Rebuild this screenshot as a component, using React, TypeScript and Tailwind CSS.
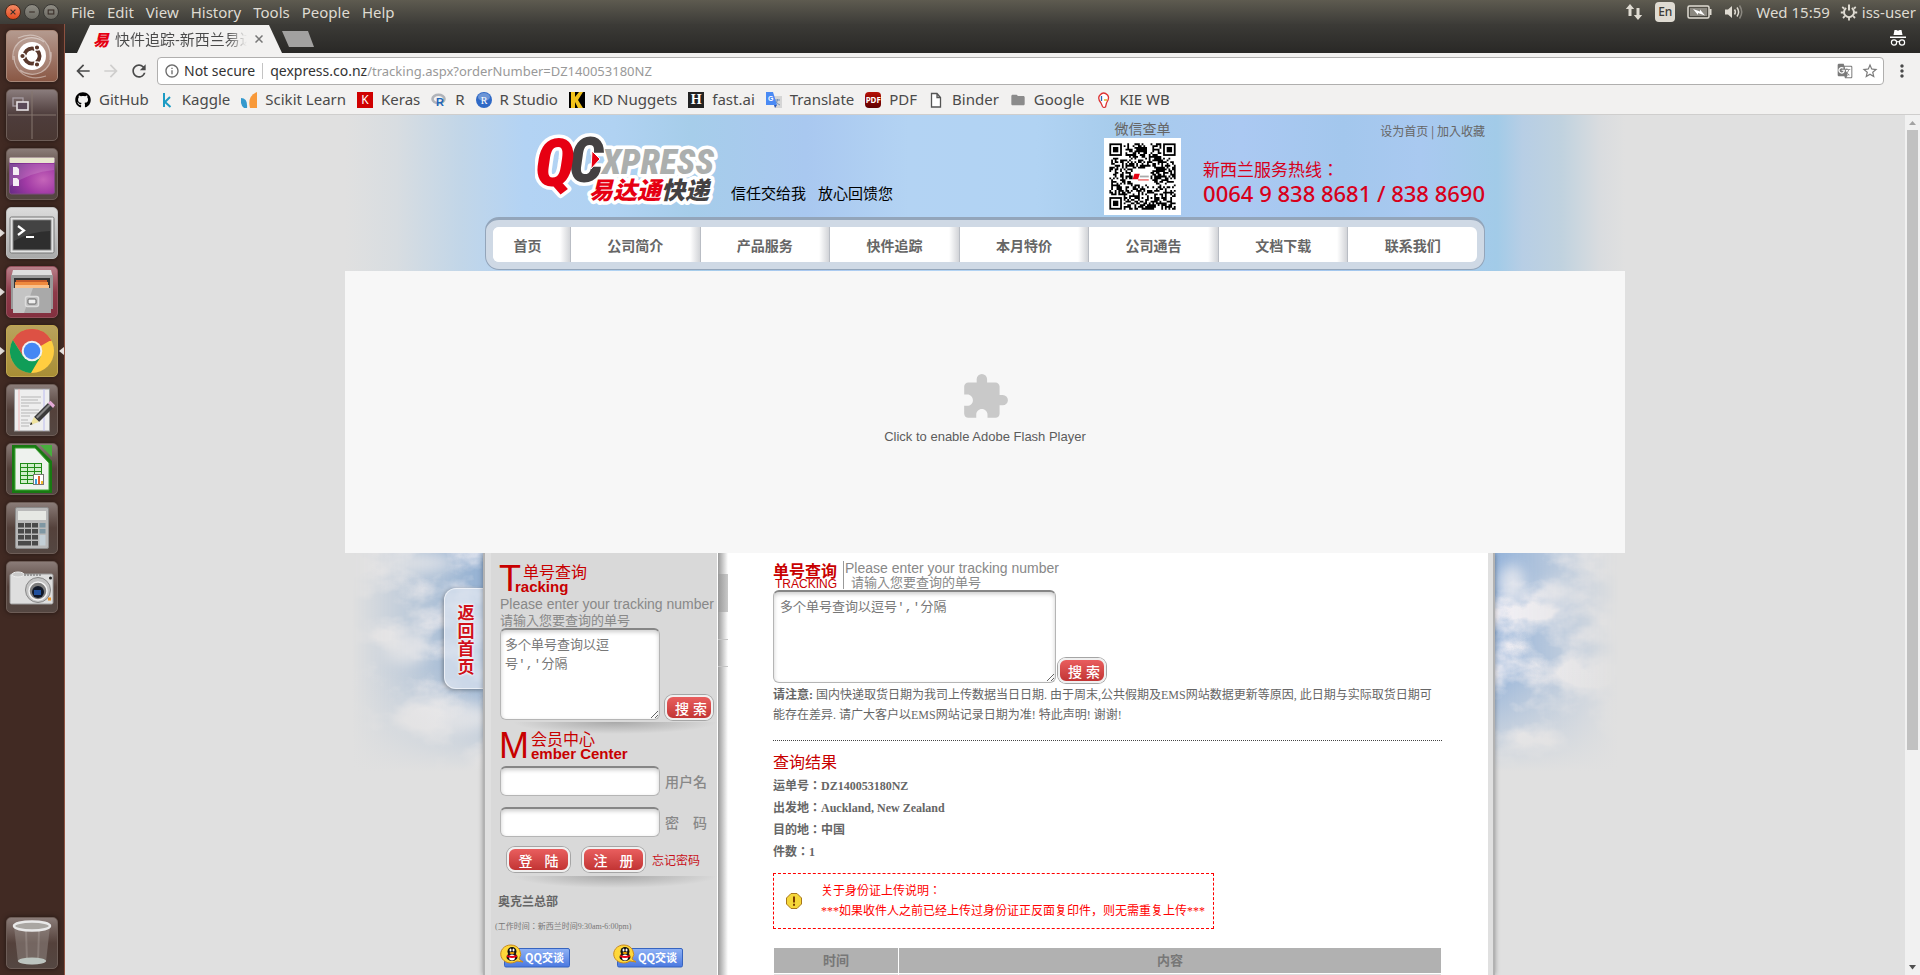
import React from "react";
import {
  MdArrowBack,
  MdArrowForward,
  MdExtension,
  MdFolder,
  MdGTranslate,
  MdInfoOutline,
  MdMoreVert,
  MdRefresh,
  MdStarBorder,
} from "react-icons/md";
import { FaGithub } from "react-icons/fa";

/* ---------- Desktop panel ---------- */

const MENUS = ["File", "Edit", "View", "History", "Tools", "People", "Help"];

function WindowButton({ label, close, children }: { label: string; close?: boolean; children: React.ReactNode }) {
  return (
    <button
      aria-label={label}
      className={
        close
          ? "flex size-4 items-center justify-center rounded-full border border-[#4a2a1c] bg-linear-to-b from-[#f58a63] to-[#e2491c]"
          : "flex size-4 items-center justify-center rounded-full border border-[#3a3935] bg-linear-to-b from-[#8f8d84] to-[#6b6962]"
      }
    >
      <svg viewBox="0 0 10 10" className="size-2" fill="none" stroke="#3a2f2a" strokeWidth="1.4">
        {children}
      </svg>
    </button>
  );
}

function TopPanel() {
  return (
    <header className="flex h-6 shrink-0 items-center justify-between bg-linear-to-b from-[#5e5b50] to-[#3d3c38] pl-[5px] pr-1 text-[15px] text-[#dfdbd2]">
      <div className="flex items-center">
        <div className="flex gap-[3px]">
          <WindowButton label="Close" close>
            <path d="M2 2l6 6M8 2l-6 6" />
          </WindowButton>
          <WindowButton label="Minimize">
            <path d="M1.500 5h7" />
          </WindowButton>
          <WindowButton label="Maximize">
            <rect x="1.500" y="2.500" width="7" height="5" />
          </WindowButton>
        </div>
        <nav className="ml-3 flex gap-3">
          {MENUS.map((m) => (
            <button key={m} className="leading-6">
              {m}
            </button>
          ))}
        </nav>
      </div>
      <div className="flex items-center">
        <svg viewBox="0 0 18 18" className="mr-3 h-[18px] w-[18px]" fill="#dfdbd2">
          <path d="M5 1l4.200 5H6.500v7h-3V6H.800zM13 17l-4.200-5h2.700V5h3v7h2.700z" />
        </svg>
        <span className="mr-3 flex h-5 w-5 items-center justify-center rounded-sm bg-[#dfdbd2] text-xs font-medium text-[#3d3c38]">En</span>
        <svg viewBox="0 0 25 14" className="mr-3 h-3.5 w-[25px]">
          <rect x="1" y="1" width="21" height="12" rx="1.500" fill="none" stroke="#dfdbd2" strokeWidth="1.500" />
          <rect x="3" y="3" width="17" height="8" fill="#8b8880" />
          <rect x="22.500" y="4" width="2" height="6" fill="#dfdbd2" />
          <path d="M6 4l7 2.500 0-2 5 6-7-2.500 0 2z" fill="#fff" />
        </svg>
        <svg viewBox="0 0 20 18" className="mr-3 h-[18px] w-5" fill="none" stroke="#dfdbd2" strokeWidth="1.500">
          <path d="M1 6.500h3l4-3.500v12l-4-3.500H1z" fill="#dfdbd2" stroke="none" />
          <path d="M10.500 6.500q1.800 2.500 0 5" />
          <path d="M13 4.500q3.200 4.500 0 9" />
          <path d="M15.500 2.500q4.500 6.500 0 13" stroke="#8b8880" />
        </svg>
        <span className="mr-2.5">Wed 15:59</span>
        <svg viewBox="0 0 18 18" className="mr-1 size-[18px]" fill="none" stroke="#dfdbd2" strokeWidth="2">
          <path d="M6.200 5a5 5 0 1 0 5.600 0M9 1.500v6" />
          <path d="M2.200 4l2 1.500M15.800 4l-2 1.500M.800 9.500h2.700M14.500 9.500h2.700M3 15l1.800-1.800M15 15l-1.800-1.800M9 15v2.500" strokeWidth="1.800" />
        </svg>
        <span>iss-user</span>
      </div>
    </header>
  );
}

/* ---------- Launcher ---------- */

const TILE_DARK = "bg-linear-to-b from-[#8a7c78] via-[#54413b] to-[#544742] border-[#6d5d57]";

function Tile({ tone, label, running, focused, children }: { tone: string; label: string; running?: boolean; focused?: boolean; children: React.ReactNode }) {
  return (
    <div className="flex items-center">
      <svg viewBox="0 0 6 8" className="h-2 w-1.5 shrink-0">
        {running && <path d="M0 0l5 4-5 4z" fill="#e4dedb" />}
      </svg>
      <button aria-label={label} className={`flex size-[52px] shrink-0 items-center justify-center overflow-hidden rounded-[5px] border shadow-[0_0_5px_rgba(0,0,0,0.5)] ${tone}`}>
        <svg viewBox="0 0 52 52" className="size-[52px] shrink-0">
          {children}
        </svg>
      </button>
      <svg viewBox="0 0 6 8" className="h-2 w-1.5 shrink-0">
        {focused && <path d="M6 0l-5 4 5 4z" fill="#e4dedb" />}
      </svg>
    </div>
  );
}

function Launcher() {
  return (
    <aside className="flex w-[65px] shrink-0 flex-col justify-between border-r border-[#8d5140] bg-[#412a23] pb-1.5 pt-1.5">
      <div className="flex flex-col gap-[7px]">
        <Tile tone="bg-linear-to-b from-[#b49a8f] to-[#8a5845] border-[#a98878]" label="Dash">
          <circle cx="26" cy="26" r="19" fill="#fff" opacity=".14" />
          <path d="M7 30C4 10 26 2 38 12M45 22c3 20-19 28-31 18M12 8c18-8 34 2 32 22M40 46C22 52 8 42 8 26" fill="none" stroke="#fff" strokeOpacity=".4" strokeWidth="1.200" />
          <circle cx="26" cy="26" r="14" fill="#fff" />
          <circle cx="26" cy="26" r="7.500" fill="none" stroke="#5a382c" strokeWidth="4" />
          <g stroke="#fff" strokeWidth="1.500">
            <path d="M26 26H14M26 26l6-11M26 26l6 11" />
          </g>
          <circle cx="26" cy="26" r="5.500" fill="#fff" />
          <g fill="#5a382c" stroke="#fff" strokeWidth="1.200">
            <circle cx="16.500" cy="26" r="2.700" />
            <circle cx="31" cy="17.500" r="2.700" />
            <circle cx="31" cy="34.500" r="2.700" />
          </g>
        </Tile>
        <Tile tone="bg-linear-to-b from-[#8a7c7c] via-[#4e3d3c] to-[#4a3833] border-[#6d5d57]" label="Workspaces">
          <path d="M26 2v48M2 26h48" stroke="#85776f" strokeWidth="1" />
          <rect x="7" y="9" width="10" height="8" fill="none" stroke="#a79da4" strokeWidth="1.300" />
          <rect x="11" y="13" width="11" height="8" fill="#5b4a58" stroke="#e6e2e4" strokeWidth="1.600" />
        </Tile>
        <Tile tone={TILE_DARK} label="Desktop">
          <defs>
            <radialGradient id="desk" cx=".75" cy=".6" r=".8">
              <stop offset="0" stopColor="#c565b9" />
              <stop offset=".5" stopColor="#a13aa5" />
              <stop offset="1" stopColor="#6b2c87" />
            </radialGradient>
          </defs>
          <rect x="3.500" y="10" width="45" height="36" rx="2" fill="url(#desk)" stroke="#7f4b83" />
          <rect x="3.500" y="9.500" width="45" height="5.500" rx="1" fill="#e8e6cf" />
          <path d="M4 16h44v6Q24 24 4 38z" fill="#fff" opacity=".15" />
          <path d="M7 19h4l2 2v6H7zM7 30h4l2 2v6H7z" fill="#f4eef4" />
        </Tile>
        <Tile tone="bg-linear-to-b from-[#dcdcdc] to-[#a9a9a9] border-[#bcbcbc]" label="Terminal" running>
          <rect x="4" y="10" width="44" height="36" rx="1.500" fill="#e4e4e4" stroke="#777" />
          <rect x="7" y="13" width="38" height="30" fill="#2e2e2e" stroke="#8a8a8a" />
          <path d="M8 14h36v10Q26 24 8 34z" fill="#fff" opacity=".1" />
          <path d="M12 19l6 4.500-6 4.500" fill="none" stroke="#fff" strokeWidth="2.200" />
          <path d="M20 30h8" stroke="#fff" strokeWidth="1.800" />
        </Tile>
        <Tile tone="bg-linear-to-b from-[#b8808a] via-[#8e3a49] to-[#83303f] border-[#95505c]" label="Files" running>
          <path d="M7 4h38l2 8H5z" fill="#dedede" />
          <rect x="5" y="9" width="42" height="34" fill="#999" />
          <rect x="8" y="12" width="36" height="11" fill="#333" />
          <path d="M10 14h31v8H10z" fill="#c55b2a" />
          <path d="M9 16h33v7H9z" fill="#ef8a3e" />
          <path d="M9 19h34v4H9z" fill="#f9c08a" />
          <path d="M7 22h38v25H7z" fill="#a9a9a9" />
          <path d="M7 22h20L18 47H7z" fill="#c4c4c4" />
          <rect x="19.500" y="30.500" width="13" height="10" rx="2" fill="#bdbdbd" stroke="#ddd" strokeWidth="1.500" />
          <rect x="22" y="33" width="8" height="5" rx="1" fill="#eee" stroke="#666" />
        </Tile>
        <Tile tone="bg-linear-to-b from-[#b9a25c] to-[#a88e35] border-[#c0a650]" label="Chrome" running focused>
          <circle cx="26" cy="26" r="22" fill="#ffcd40" />
          <path d="M26 26L6.900 15A22 22 0 0 1 45.100 15z" fill="#dd5144" />
          <path d="M26 16h19.500A22 22 0 0 0 6.900 15L17 31z" fill="#dd5144" />
          <path d="M6.900 15A22 22 0 0 0 25 48l10-17-9 4-9-4z" fill="#109d58" />
          <circle cx="26" cy="26" r="10.300" fill="#f1f1f1" />
          <circle cx="26" cy="26" r="8.300" fill="#4587f3" />
        </Tile>
        <Tile tone={TILE_DARK} label="Text editor">
          <rect x="8.500" y="5" width="35" height="42" fill="#eee" stroke="#999" />
          <path d="M13 5v42" stroke="#f0b6b6" />
          <path d="M38 5v42" stroke="#bcbcf0" />
          <path d="M15 13h20M15 16h17M15 19h20M15 22h8M15 26h18M15 29h17M15 32h9M15 36h7M15 39h9M15 42h8" stroke="#b5b5b5" />
          <path d="M28 33L42 19l5 5-14 14z" fill="#3a3a3a" />
          <path d="M30 33L43 20l1.500 1.500L31.500 34.500z" fill="#888" />
          <path d="M28 33l5 5-9 3z" fill="#efe3a0" />
          <path d="M25 38l1.500 2.200L24 41z" fill="#222" />
          <path d="M42 19l2.500-2.300 4.500 4.500L47 24z" fill="#e3a9d5" />
        </Tile>
        <Tile tone={TILE_DARK} label="Calc">
          <path d="M6 2h24l16 16v32H6z" fill="#187a12" />
          <path d="M34 2h12v12z" fill="#48ad3d" />
          <path d="M9 5h20l14 15v27H9z" fill="#eef2ee" stroke="#3fa634" strokeWidth="1" />
          <g fill="#cfeec9" stroke="#1f8a17" strokeWidth="1">
            <rect x="14.500" y="20.500" width="21" height="20" />
            <path d="M14.500 24.500h21M14.500 28.500h21M14.500 32.500h21M14.500 36.500h21M21.500 20.500v20M28.500 20.500v20" />
          </g>
          <rect x="27.500" y="31.500" width="10" height="10" fill="#fff" stroke="#777" />
          <path d="M29 36h2v5h-2z" fill="#3c9de0" />
          <path d="M32 33h2v8h-2z" fill="#e0602c" />
          <path d="M35 38h2v3h-2z" fill="#f2b92c" />
        </Tile>
        <Tile tone={TILE_DARK} label="Calculator">
          <rect x="9.500" y="5.500" width="33" height="41" rx="1.500" fill="#b9b9b9" stroke="#8b8b8b" />
          <rect x="12" y="9" width="28" height="9" fill="#e6e8e4" />
          <g fill="#4a4a4a">
            <path d="M12 21h6v4.500h-6zM19 21h6v4.500h-6zM26 21h6v4.500h-6zM12 27h6v4.500h-6zM19 27h6v4.500h-6zM26 27h6v4.500h-6zM12 33h6v4.500h-6zM19 33h6v4.500h-6zM26 33h6v4.500h-6zM12 39h13v4.500H12zM26 39h6v4.500h-6z" />
          </g>
          <path d="M33.500 21h6v4.500h-6zM33.500 27h6v4.500h-6z" fill="#7f97a3" />
          <path d="M33.500 33h6v10.500h-6z" fill="#c3cfd6" />
        </Tile>
        <Tile tone={TILE_DARK} label="Screenshot">
          <rect x="4" y="13" width="43" height="30" rx="1.500" fill="#dedede" stroke="#9c9c9c" />
          <ellipse cx="12" cy="13.500" rx="6" ry="2.500" fill="#c9c9c9" stroke="#eee" />
          <path d="M18 14h18" stroke="#888" strokeWidth="1.500" strokeDasharray="2 1" />
          <circle cx="32" cy="29" r="12.500" fill="#c4c4c4" stroke="#888" />
          <circle cx="32" cy="30" r="9" fill="#7c7c7c" stroke="#f2f2f2" strokeWidth="1.500" />
          <circle cx="32" cy="31" r="6" fill="#101828" />
          <rect x="28" y="29" width="7" height="5" fill="#1f4f9d" />
          <circle cx="44.500" cy="17" r="1.500" fill="#222" />
          <rect x="42" y="36.500" width="3" height="3" fill="#e8932a" />
        </Tile>
      </div>
      <Tile tone={TILE_DARK} label="Trash">
        <path d="M8 9l4 36q14 5 28 0l4-36z" fill="#9c928d" opacity=".45" />
        <path d="M20 13l1 31M33 13l-1 31" stroke="#c8c0bc" strokeOpacity=".25" strokeWidth="2" />
        <ellipse cx="26" cy="44" rx="14" ry="3.500" fill="#bcc4bf" />
        <ellipse cx="26" cy="9" rx="18" ry="4.500" fill="#a9a6a2" stroke="#e9e9e9" strokeWidth="2.500" />
      </Tile>
    </aside>
  );
}

/* ---------- Browser chrome ---------- */

function TabStrip() {
  return (
    <div className="flex h-[29px] shrink-0 items-end justify-between bg-linear-to-b from-[#3c3b37] to-[#292826]">
      <div className="flex h-7 items-center pl-3">
        <div className="flex h-7 w-[205px] items-center bg-[#f2f1f0] pl-3 pr-4 [clip-path:polygon(0_100%,13px_0,192px_0,100%_100%)]">
          <span className="w-[26px] pl-1 font-['Noto_Sans_CJK_JP',sans-serif] text-base leading-6 font-black text-[#e60012] italic">易</span>
          <span className="w-[132px] overflow-hidden bg-linear-to-r from-[#4a4a4a] from-85% to-transparent bg-clip-text text-[15px] leading-6 whitespace-nowrap text-transparent">
            快件追踪-新西兰易达
          </span>
          <button aria-label="Close tab" className="ml-2">
            <svg viewBox="0 0 8 8" className="size-2" stroke="#777" strokeWidth="1.500">
              <path d="M0.500 0.500l7 7M7.500 0.500l-7 7" />
            </svg>
          </button>
        </div>
        <button aria-label="New tab" className="h-4 w-8 bg-[#a2a1a0] [clip-path:polygon(0_0,26px_0,100%_100%,7px_100%)]" />
      </div>
      <svg viewBox="0 0 18 18" className="mr-[13px] mb-1.5 size-[18px]" fill="#fff">
        <path d="M5.500 1h1.800l1.700.7L10.700 1h1.800l1 5h-9zM1 7.500h16V9H1z" />
        <g fill="none" stroke="#fff" strokeWidth="1.200">
          <circle cx="5" cy="13.500" r="2.600" />
          <circle cx="13" cy="13.500" r="2.600" />
          <path d="M7.600 13q1.400-1 2.800 0" />
        </g>
      </svg>
    </div>
  );
}

function Toolbar() {
  return (
    <div className="flex h-9 shrink-0 items-center bg-[#f2f1f0] pl-2 pr-2 text-sm text-[#4a4a4a]">
      <button aria-label="Back" className="mr-2">
        <MdArrowBack className="size-5" />
      </button>
      <button aria-label="Forward" className="mr-2">
        <MdArrowForward className="size-5 text-[#cfcecd]" />
      </button>
      <button aria-label="Reload" className="mr-2">
        <MdRefresh className="size-5" />
      </button>
      <div className="flex h-7 flex-1 items-center rounded-sm border border-[#b0afae] bg-white pl-1.5 pr-1">
        <MdInfoOutline className="mr-1 size-4 text-[#6b6b6b]" />
        <span className="text-[#333]">Not secure</span>
        <span className="mx-[7px] h-4 w-px bg-[#c4c4c4]" />
        <label htmlFor="url" className="text-[#333]">
          qexpress.co.nz
        </label>
        <input id="url" className="min-w-0 flex-1 bg-transparent text-[13px] text-[#999] outline-none" defaultValue="/tracking.aspx?orderNumber=DZ140053180NZ" />
        <MdGTranslate className="mr-2 size-4 text-[#7a7a7a]" />
        <MdStarBorder className="size-[18px] text-[#7a7a7a]" />
      </div>
      <button aria-label="Menu" className="ml-2">
        <MdMoreVert className="size-5" />
      </button>
    </div>
  );
}

const BOOKMARKS: { name: string; icon: React.ReactNode }[] = [
  { name: "GitHub", icon: <FaGithub className="size-4 text-black" /> },
  {
    name: "Kaggle",
    icon: (
      <svg viewBox="-2 0 14 16" className="h-4 w-3.5" fill="none" stroke="#1c9bc4" strokeWidth="2">
        <path d="M2 1v14M8 5L3 10l5.500 5" />
      </svg>
    ),
  },
  {
    name: "Scikit Learn",
    icon: (
      <svg viewBox="0 0 16 16" className="size-4">
        <path d="M0 6q7 0 6 10H3Q-1 13 0 6z" fill="#3499cd" />
        <path d="M16 0v16H9Q6 4 16 0z" fill="#f89939" />
      </svg>
    ),
  },
  { name: "Keras", icon: <span className="flex size-4 items-center justify-center bg-[#d00000] text-xs text-white">K</span> },
  {
    name: "R",
    icon: (
      <svg viewBox="0 0 16 16" className="size-4">
        <ellipse cx="7.500" cy="7" rx="6" ry="4.200" fill="none" stroke="#b1b4ba" strokeWidth="2.600" />
        <text x="5" y="14" fontSize="11" fontWeight="700" fill="#2066b8" fontFamily="Liberation Sans, sans-serif">R</text>
      </svg>
    ),
  },
  {
    name: "R Studio",
    icon: (
      <svg viewBox="0 0 16 16" className="size-4">
        <circle cx="8" cy="8" r="8" fill="#2f69c6" />
        <ellipse cx="8" cy="5" rx="6" ry="4" fill="#fff" opacity=".3" />
        <text x="8" y="12" textAnchor="middle" fontSize="10" fill="#fff" fontFamily="Liberation Serif, serif">R</text>
      </svg>
    ),
  },
  {
    name: "KD Nuggets",
    icon: (
      <svg viewBox="0 0 16 16" className="size-4">
        <path d="M0 0h16v16H0z" />
        <path d="M2 0h4v5l4-5h4L9 8l5 8H9L6 10v6H2z" fill="#f2c21a" />
      </svg>
    ),
  },
  { name: "fast.ai", icon: <span className="flex size-4 items-center justify-center bg-[#222] font-['Liberation_Serif',serif] text-sm font-bold text-white">H</span> },
  {
    name: "Translate",
    icon: (
      <svg viewBox="0 0 16 16" className="size-4">
        <path d="M6 4h10v12H9z" fill="#d5d5d5" />
        <path d="M9 8h5M11.500 7v1q-.5 3-3 4.500M10 9.500q1 2.500 4 3.500" stroke="#7390b8" fill="none" />
        <path d="M0 0h7l4 13H0z" fill="#4a8af4" />
        <path d="M8 13h3l-2 3z" fill="#2c57b5" />
        <text x="2" y="9" fontSize="7" fontWeight="700" fill="#fff" fontFamily="Liberation Sans, sans-serif">G</text>
      </svg>
    ),
  },
  { name: "PDF", icon: <span className="flex size-4 items-center justify-center overflow-hidden rounded-sm bg-linear-to-b from-[#b81208] to-[#5f0000] text-[8px] font-bold text-white">PDF</span> },
  {
    name: "Binder",
    icon: (
      <svg viewBox="0 0 12 16" className="mx-0.5 h-4 w-3" fill="#fff" stroke="#555" strokeWidth="1.300">
        <path d="M1.500 1.500h5.500l3.500 4v9.500h-9zM7 1.500v4h3.500" />
      </svg>
    ),
  },
  { name: "Google", icon: <MdFolder className="size-4 text-[#8b8b8b]" /> },
  {
    name: "KIE WB",
    icon: (
      <svg viewBox="0 0 16 16" className="size-4" fill="none" strokeWidth="1.300">
        <path d="M5 11Q1 6 4 3q3.500-4 7.500 0 2.500 3-1 8l-1 4q-2 1-3-.5z" fill="#fff" stroke="#d33" />
        <path d="M5.500 4v5" stroke="#2668b3" />
        <path d="M8 8h3" stroke="#d9a400" />
      </svg>
    ),
  },
];

function BookmarkBar() {
  return (
    <nav className="flex h-[26px] shrink-0 items-center gap-[11px] border-b border-[#cfcecd] bg-[#f2f1f0] pb-1 pl-[10px] text-[15px] text-[#4a4a4a]">
      {BOOKMARKS.map((b) => (
        <a key={b.name} href="#" className="flex items-center gap-2">
          {b.icon}
          {b.name}
        </a>
      ))}
    </nav>
  );
}

/* ---------- Site header ---------- */

const QR_SIZE = 37;

function qrPath() {
  let seed = 20177;
  let d = "";
  const corner = (x: number, y: number) => (x < 8 && y < 8) || (x > 28 && y < 8) || (x < 8 && y > 28);
  for (let y = 0; y < QR_SIZE; y++) {
    for (let x = 0; x < QR_SIZE; x++) {
      seed = (seed * 1103515245 + 12345) % 2147483648;
      const centre = x > 12 && x < 23 && y > 13 && y < 23;
      if (!corner(x, y) && !centre && seed / 2147483648 > 0.48) d += `M${x} ${y}h1v1h-1z`;
    }
  }
  return d;
}

function QrCode() {
  return (
    <svg viewBox="-3 -3 43 43" className="size-[77px] bg-white" role="img" aria-label="QR">
      <path d={qrPath()} />
      {[[0, 0], [30, 0], [0, 30]].map(([x, y]) => (
        <g key={`${x}-${y}`}>
          <rect x={x} y={y} width="7" height="7" />
          <rect x={x + 1} y={y + 1} width="5" height="5" fill="#fff" />
          <rect x={x + 2} y={y + 2} width="3" height="3" />
        </g>
      ))}
      <path d="M14 17h3l-1 3h-3z" fill="#e60012" />
      <path d="M17 18h5v1h-5z" fill="#aaa" />
      <path d="M16 20h6v.8h-6z" fill="#e66" />
    </svg>
  );
}

function Logo() {
  return (
    <svg viewBox="0 0 190 76" className="h-[76px] w-[190px] shrink-0" role="img" aria-label="QCXPRESS 易达通快递">
      <g fontFamily="'Roboto Condensed', 'Liberation Sans', sans-serif" fontWeight="900" fontStyle="italic" strokeLinejoin="round">
        <g stroke="#fff" strokeWidth="7" fill="#fff">
          <text x="0" y="55" fontSize="67">Q</text>
          <text x="34" y="51" fontSize="62">C</text>
          <text x="67" y="43" fontSize="35">XPRESS</text>
          <text x="54" y="68" fontSize="24" fontFamily="'Noto Sans CJK JP', sans-serif">易达通快递</text>
        </g>
        <text x="67" y="43" fontSize="35" fill="#acafae">XPRESS</text>
        <text x="34" y="51" fontSize="62" fill="#444142">C</text>
        <text x="0" y="55" fontSize="67" fill="#e60012">Q</text>
        <text x="54" y="68" fontSize="24" fontFamily="'Noto Sans CJK JP', sans-serif" fill="#e60012">
          易达通<tspan fill="#444142">快递</tspan>
        </text>
      </g>
      <path d="M57 20l8 8-9 10z" fill="#e60012" stroke="#fff" strokeWidth="1" />
    </svg>
  );
}

const NAV = [
  { label: "首页", width: "w-[78px]" },
  { label: "公司简介", width: "flex-1" },
  { label: "产品服务", width: "flex-1" },
  { label: "快件追踪", width: "flex-1" },
  { label: "本月特价", width: "flex-1" },
  { label: "公司通告", width: "flex-1" },
  { label: "文档下载", width: "flex-1" },
  { label: "联系我们", width: "flex-1" },
];

function SiteHeader() {
  return (
    <div className="mx-auto w-full max-w-[1280px] bg-[linear-gradient(90deg,#e0e0e0_0%,#d8dde1_4%,#c2d6e8_9%,#b3d3f4_14%,#b0d2f2_21%,#a6cdea_27%,#a9c8f0_36%,#b3d3f3_44%,#b1d3f3_54%,#a7ccec_60%,#abc9f2_70%,#a3c7ed_78%,#a9c9f0_84%,#a2cbe8_90%,#b7cee5_92%,#c0d2df_95%,#d9dcdf_98%,#e0e0e0_100%)]">
      <div className="mx-auto max-w-[1000px]">
        <div className="flex h-[102px] items-start text-[#666]">
          <div className="ml-[50px] pt-4">
            <Logo />
          </div>
          <p className="ml-1.5 flex gap-3 pt-[66px] text-[15px] leading-6 text-black">
            <span>信任交给我</span>
            <span>放心回馈您</span>
          </p>
          <div className="ml-auto flex items-start">
            <div className="flex flex-col items-center pt-[3px] text-sm leading-5">
              微信查单
              <QrCode />
            </div>
            <div className="ml-[22px] text-[#d7001b]">
              <p className="pt-2 text-right text-xs leading-4 text-[#666]">
                <a href="#">设为首页</a> | <a href="#">加入收藏</a>
              </p>
              <p className="mt-[18px] text-[17px] leading-6">新西兰服务热线：</p>
              <p className="font-['Noto_Sans',sans-serif] text-[22px] leading-6 font-medium">0064 9 838 8681 / 838 8690</p>
            </div>
          </div>
        </div>
        <nav className="h-[54px]">
          <div className="h-[53px] rounded-[14px] border border-t-[3px] border-[#93a5ba] bg-[#cfd9e5] px-[7px] py-[7px]">
            <ul className="flex h-full overflow-hidden rounded-md bg-white">
              {NAV.map((n, i) => (
                <li
                  key={n.label}
                  className={`${n.width} ${i < NAV.length - 1 ? "border-r border-[#b9bdc4] bg-[linear-gradient(270deg,#d2d4d8,#fff_10px)]" : ""} ${i === 0 ? "pr-2" : "px-3"} flex items-center justify-center text-sm font-bold text-[#666]`}
                >
                  <a href="#">{n.label}</a>
                </li>
              ))}
            </ul>
          </div>
        </nav>
      </div>
    </div>
  );
}

/* ---------- Site body ---------- */

function Sky({ side }: { side: "left" | "right" }) {
  const left = side === "left";
  return (
    <svg viewBox="0 0 138 230" preserveAspectRatio="none" className="absolute inset-x-0 top-0 h-[230px] w-full">
      <defs>
        <linearGradient id={`h-${side}`} x1={left ? 0 : 1} x2={left ? 1 : 0} y1="0" y2="0">
          <stop offset=".05" stopColor="#000" />
          <stop offset=".5" stopColor="#777" />
          <stop offset="1" stopColor="#fff" />
        </linearGradient>
        <linearGradient id={`v-${side}`} x1="0" x2="0" y1="0" y2="1">
          <stop offset=".5" stopColor="#e0e0e0" stopOpacity="0" />
          <stop offset=".95" stopColor="#e0e0e0" />
        </linearGradient>
        <mask id={`m-${side}`}>
          <rect width="138" height="230" fill={`url(#h-${side})`} />
        </mask>
        <filter id={`f-${side}`} x="0" y="0" width="100%" height="100%" colorInterpolationFilters="sRGB">
          <feTurbulence type="fractalNoise" baseFrequency="0.014 0.022" numOctaves="5" seed={left ? 4 : 9} />
          <feColorMatrix values="0 0 0 0 .95  0 0 0 0 .94  0 0 0 0 .96  3.6 0 0 0 -1.5" />
        </filter>
        <filter id={`b-${side}`} x="-50%" y="-50%" width="200%" height="200%">
          <feGaussianBlur stdDeviation="7" />
        </filter>
      </defs>
      <g mask={`url(#m-${side})`}>
        <rect width="138" height="230" fill={left ? "#93b0d2" : "#93b2d9"} />
        <rect width="138" height="230" filter={`url(#f-${side})`} />
        <g filter={`url(#b-${side})`} fill="#f0eff3" opacity=".8">
          {left ? (
            <>
              <ellipse cx="70" cy="10" rx="40" ry="8" />
              <ellipse cx="60" cy="95" rx="22" ry="16" />
              <ellipse cx="100" cy="165" rx="50" ry="16" />
            </>
          ) : (
            <>
              <ellipse cx="18" cy="30" rx="14" ry="18" />
              <ellipse cx="66" cy="38" rx="22" ry="9" />
            </>
          )}
        </g>
      </g>
      <rect width="138" height="230" fill={`url(#v-${side})`} />
    </svg>
  );
}

function RedButton({ children, wide }: { children: string; wide?: boolean }) {
  return (
    <button
      className={`${wide ? "w-[63px] gap-3" : "w-12 gap-1 pl-1"} mx-px flex h-[25px] items-center justify-center rounded-lg border-2 border-[#f0f0f0] bg-linear-to-b from-[#e95e5e] to-[#c23434] text-sm font-medium text-white shadow-[0_0_0_1px_#a5a5a5]`}
    >
      {children.split("").map((c) => (
        <span key={c}>{c}</span>
      ))}
    </button>
  );
}

const FIELD = "rounded-md border border-[#b5b5b5] border-t-2 border-t-[#868686] bg-white shadow-[inset_0_2px_4px_rgba(0,0,0,0.2)] outline-none";
const AREA_TEXT = "font-['Liberation_Mono','Noto_Sans_CJK_JP',monospace] text-[13px] leading-[19px] text-[#777]";

function InitialHeading({ initial, rest, title }: { initial: string; rest: string; title: string }) {
  return (
    <h2 className="flex text-[#c80000]">
      <span className="font-['Liberation_Sans',sans-serif] text-[36px] leading-8">{initial}</span>
      <span className="flex flex-col pl-0.5">
        <span className="text-base leading-4">{title}</span>
        <span className={`${initial === "T" ? "-ml-2" : ""} font-['Liberation_Sans',sans-serif] text-[15px] leading-4 font-bold`}>{rest}</span>
      </span>
    </h2>
  );
}

function QqButton() {
  return (
    <a href="#" className="block">
      <svg viewBox="0 0 70 24" className="h-6 w-[70px]">
        <defs>
          <linearGradient id="qq" x1="0" x2="0" y1="0" y2="1">
            <stop offset="0" stopColor="#8fb2f5" />
            <stop offset="1" stopColor="#4a78e0" />
          </linearGradient>
        </defs>
        <rect x="4.500" y="4.500" width="65" height="18.500" rx="1.500" fill="url(#qq)" stroke="#3764bf" />
        <path d="M11 1a10 9 0 0 1 8 14l4 3-6-1A10 9 0 1 1 11 1z" fill="#ffd83a" stroke="#c98a1d" />
        <ellipse cx="12" cy="7.500" rx="4.500" ry="4.500" fill="#111" />
        <ellipse cx="12" cy="13" rx="5.500" ry="4" fill="#111" />
        <ellipse cx="12" cy="13.500" rx="3" ry="3" fill="#fff" />
        <ellipse cx="10.500" cy="6" rx="1" ry="1.500" fill="#fff" />
        <ellipse cx="13.500" cy="6" rx="1" ry="1.500" fill="#fff" />
        <ellipse cx="12" cy="9" rx="2.500" ry="1" fill="#f7a600" />
        <path d="M7 11q5 2 10 0v2q-5 2-10 0z" fill="#e60012" />
        <text x="25" y="18" fontSize="11" fontWeight="700" fill="#fff" fontFamily="'Noto Sans CJK JP', sans-serif">QQ交谈</text>
      </svg>
    </a>
  );
}

function Divider() {
  return <div className="h-3 bg-[radial-gradient(ellipse_45%_100%_at_55%_0,#a8a8a8,#d9d9d9)]" />;
}

function Sidebar() {
  return (
    <aside className="w-[227px] shrink-0 border-r border-white bg-[#d9d9d9]">
      <section className="h-[169px] pl-2 pt-2.5">
        <InitialHeading initial="T" title="单号查询" rest="racking" />
        <div className="pl-px pt-0.5 text-[#888]">
          <p className="font-['Liberation_Sans',sans-serif] text-sm leading-[15px] whitespace-nowrap">Please enter your tracking number</p>
          <label htmlFor="side-track" className="block text-[13px] leading-4">
            请输入您要查询的单号
          </label>
        </div>
        <form className="flex items-end gap-1 pl-px">
          <textarea id="side-track" className={`${FIELD} ${AREA_TEXT} h-[92px] w-40 resize px-1 pt-1.5`} defaultValue="多个单号查询以逗号','分隔" />
          <RedButton>搜索</RedButton>
        </form>
      </section>
      <section className="h-[154px]">
        <Divider />
        <div className="-mt-1 pl-2">
          <InitialHeading initial="M" title="会员中心" rest="ember Center" />
          <form className="pl-px">
            <div className="mt-1 flex items-center gap-[5px] text-sm font-medium text-[#888]">
              <input id="user" className={`${FIELD} h-[30px] w-40 px-2`} />
              <label htmlFor="user">用户名</label>
            </div>
            <div className="mt-[11px] flex items-center gap-[5px] text-sm font-medium text-[#888]">
              <input id="pass" type="password" className={`${FIELD} h-[30px] w-40 px-2`} />
              <label htmlFor="pass" className="flex w-[42px] justify-between">
                <span>密</span>
                <span>码</span>
              </label>
            </div>
            <div className="mt-2.5 flex items-center gap-2.5 pl-1.5">
              <RedButton wide>登陆</RedButton>
              <RedButton wide>注册</RedButton>
              <a href="#" className="-ml-1 text-xs text-[#c8101a]">
                忘记密码
              </a>
            </div>
          </form>
        </div>
      </section>
      <section>
        <Divider />
        <div className="pl-1">
          <h3 className="mt-1 pl-[3px] text-xs leading-[18px] font-bold text-[#666]">奥克兰总部</h3>
          <p className="mt-[11px] font-['Liberation_Serif','Noto_Sans_CJK_JP',serif] text-[8px] leading-3 text-[#777]">(工作时间：新西兰时间9:30am-6:00pm)</p>
          <div className="mt-[11px] flex gap-[43px] pl-[5px]">
            <QqButton />
            <QqButton />
          </div>
        </div>
      </section>
    </aside>
  );
}

const DETAILS = [
  ["运单号：", "DZ140053180NZ"],
  ["出发地：", "Auckland, New Zealand"],
  ["目的地：", "中国"],
  ["件数：", "1"],
];

function MainColumn() {
  return (
    <main className="min-w-0 flex-1 bg-white pl-[45px] pr-[46px] font-['Liberation_Serif','Noto_Sans_CJK_JP',serif] text-xs text-[#666]">
      <div className="flex pt-2">
        <h1 className="text-[#c80000]">
          <span className="block font-['Noto_Sans_CJK_JP',sans-serif] text-base leading-[18px] font-bold">单号查询</span>
          <span className="block pl-0.5 font-['Liberation_Sans',sans-serif] text-xs leading-[10px]">TRACKING</span>
        </h1>
        <div className="ml-1.5 h-7 border-l border-[#999] pl-px text-[#888]">
          <p className="font-['Liberation_Sans',sans-serif] text-sm leading-[14px]">Please enter your tracking number</p>
          <label htmlFor="main-track" className="block pl-1.5 font-['Noto_Sans_CJK_JP',sans-serif] text-[13px] leading-[14px]">
            请输入您要查询的单号
          </label>
        </div>
      </div>
      <form className="flex items-end gap-px pt-px font-['Noto_Sans_CJK_JP',sans-serif]">
        <textarea id="main-track" className={`${FIELD} ${AREA_TEXT} h-[93px] w-[283px] resize px-1.5 pt-1.5`} defaultValue="多个单号查询以逗号','分隔" />
        <RedButton>搜索</RedButton>
      </form>
      <p className="pt-0.5 leading-5">
        <b>请注意:</b> 国内快递取货日期为我司上传数据当日日期. 由于周末,公共假期及EMS网站数据更新等原因, 此日期与实际取货日期可能存在差异. 请广大客户以EMS网站记录日期为准! 特此声明! 谢谢!
      </p>
      <hr className="mt-[15px] border-t border-dotted border-[#444]" />
      <h2 className="mt-2 font-['Noto_Sans_CJK_JP',sans-serif] text-base leading-6 text-[#c80000]">查询结果</h2>
      <ul className="mt-0.5 font-bold">
        {DETAILS.map(([k, v]) => (
          <li key={k} className="leading-[22px]">
            {k}
            {v}
          </li>
        ))}
      </ul>
      <div className="mt-2.5 flex w-fit items-center border border-dashed border-[#f00] py-[7px] pl-3 pr-2 text-[#f00]">
        <svg viewBox="0 0 16 16" className="mr-[19px] size-4">
          <path d="M5 .500h6L15.500 5v6L11 15.500H5L.500 11V5z" fill="#f5d73a" stroke="#a8771c" />
          <path d="M7 3.500h2v6H7zM7 10.800h2v2H7z" fill="#7a3c00" />
        </svg>
        <p className="leading-5">
          关于身份证上传说明：
          <br />
          ***如果收件人之前已经上传过身份证正反面复印件，则无需重复上传***
        </p>
      </div>
      <table className="mt-[19px] w-full border-separate border-spacing-x-px border-spacing-y-0">
        <thead>
          <tr className="h-[25px] bg-[#b1b1b1] text-[13px] text-[#777]">
            <th className="w-[124px]">时间</th>
            <th>内容</th>
          </tr>
        </thead>
        <tbody>
          <tr>
            <td className="border-t border-white bg-[#e0e0e0]">&nbsp;</td>
            <td className="border-t border-white bg-[#e0e0e0]">&nbsp;</td>
          </tr>
        </tbody>
      </table>
    </main>
  );
}

function SiteBody() {
  return (
    <div className="mx-auto flex min-h-0 w-full max-w-[1280px] flex-1">
      <div className="relative flex w-[138px] shrink-0 justify-end">
        <Sky side="left" />
        <a
          href="#"
          className="relative mt-[35px] flex h-[101px] w-[39px] flex-col items-center justify-center rounded-l-xl border border-r-0 border-white/60 bg-[#d5dfec]/80 pl-1 text-[17px] leading-[18px] font-bold text-[#d0101a] shadow-[-1px_1px_4px_rgba(0,0,0,0.35)] [text-shadow:0_0_3px_#fff,0_0_3px_#fff]"
        >
          <span>返</span>
          <span>回</span>
          <span>首</span>
          <span>页</span>
        </a>
      </div>
      <div className="z-10 flex min-w-0 flex-1 border-x-2 border-[#b2b2b2] bg-[#e0e0e0] shadow-[0_0_5px_rgba(0,0,0,0.35)]">
        <div className="w-1.5 shrink-0" />
        <Sidebar />
        <div className="flex w-[10px] shrink-0 flex-col bg-linear-to-r from-[#9b9b9b] to-white pt-[21px]">
          <div className="h-[38px] bg-linear-to-r from-[#999] to-[#c9c9c9]" />
          <div className="mt-[27px] h-7 border-y border-[#c4c4c4]" />
        </div>
        <MainColumn />
        <div className="w-[5px] shrink-0" />
      </div>
      <div className="relative w-[130px] shrink-0">
        <Sky side="right" />
      </div>
    </div>
  );
}

function FlashBlock() {
  return (
    <button className="z-20 mx-auto flex h-[282px] w-full max-w-[1280px] shrink-0 flex-col items-center justify-center bg-[#f7f7f7] pb-1.5 font-['Liberation_Sans',sans-serif] text-[13px] text-[#5c5c5c]">
      <MdExtension className="size-[50px] text-[#c9c9c9]" />
      <span className="mt-[5px] leading-5">Click to enable Adobe Flash Player</span>
    </button>
  );
}

function ScrollBar() {
  return (
    <div className="flex w-[15px] shrink-0 flex-col items-center bg-[#f1f1f1]">
      <svg viewBox="0 0 15 15" className="size-[15px] shrink-0">
        <path d="M4 10h7L7.500 6z" fill="#a3a3a3" />
      </svg>
      <div className="w-[11px] flex-[620] bg-[#c1c1c1]" />
      <div className="flex-[210]" />
      <svg viewBox="0 0 15 15" className="size-[15px] shrink-0">
        <path d="M4 5h7L7.500 9.500z" fill="#505050" />
      </svg>
    </div>
  );
}

export default function App() {
  return (
    <div className="flex h-screen flex-col overflow-hidden font-['Noto_Sans','Noto_Sans_CJK_SC',sans-serif]">
      <TopPanel />
      <div className="flex min-h-0 flex-1">
        <Launcher />
        <div className="flex min-w-0 flex-1 flex-col">
          <TabStrip />
          <Toolbar />
          <BookmarkBar />
          <div className="flex min-h-0 flex-1">
            <div className="flex min-w-0 flex-1 flex-col overflow-hidden bg-[#e0e0e0] font-['Noto_Sans_CJK_JP',sans-serif]">
              <SiteHeader />
              <FlashBlock />
              <SiteBody />
            </div>
            <ScrollBar />
          </div>
        </div>
      </div>
    </div>
  );
}
